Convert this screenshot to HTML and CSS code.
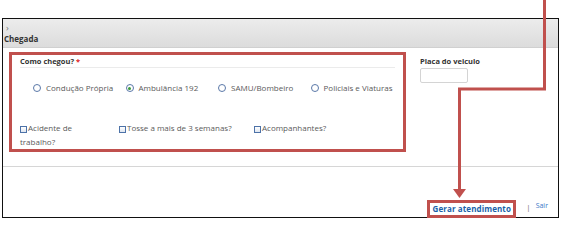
FILE: index.html
```html
<!DOCTYPE html>
<html lang="pt">
<head>
<meta charset="utf-8">
<title>Chegada</title>
<link rel="stylesheet" href="styles.css">
</head>
<body>
<div class="page">
  <div class="frame">
    <div class="header">
      <span class="chev">›</span>
      <span class="title">Chegada</span>
    </div>
    <div class="content">
      <div class="section annotated">
        <div class="label line">Como chegou?<span class="req">*</span></div>
        <div class="radios">
          <label class="radio"><span class="circle"></span>Condução Própria</label>
          <label class="radio"><span class="circle checked"></span>Ambulância 192</label>
          <label class="radio"><span class="circle"></span>SAMU/Bombeiro</label>
          <label class="radio"><span class="circle"></span>Policiais e Viaturas</label>
        </div>
        <div class="checks">
          <label class="check narrow"><span class="box"></span>Acidente de trabalho?</label>
          <label class="check"><span class="box"></span>Tosse a mais de 3 semanas?</label>
          <label class="check"><span class="box"></span>Acompanhantes?</label>
        </div>
      </div>
      <div class="field">
        <div class="label">Placa do veiculo</div>
        <div class="input"></div>
      </div>
    </div>
    <div class="footer">
      <span class="btn">Gerar atendimento</span>
      <span class="sep">|</span>
      <span class="sair">Sair</span>
    </div>
  </div>
  <svg class="arrow" width="564" height="220" viewBox="0 0 564 220">
    <path d="M544.5 0 V89 H459.5 V191" fill="none" stroke="#c0504d" stroke-width="3"/>
    <polygon points="453,189 466,189 459.5,198" fill="#c0504d"/>
  </svg>
</div>
</body>
</html>
```

FILE: styles.css
```css
* { box-sizing: border-box; }
html, body { margin: 0; padding: 0; background: #fff; }
body { font-family: "Open Sans", "Liberation Sans", sans-serif; color: #444; }

.page {
  position: relative;
  width: 564px;
  height: 220px;
  padding: 18px 0 0 2px;
  overflow: hidden;
}

.frame {
  width: 557px;
  height: 200px;
  border: 1px solid #111;
  display: flex;
  flex-direction: column;
}

.header {
  height: 29px;
  background: linear-gradient(#ececec, #dcdcdc);
  border-bottom: 1px solid #d0d0d0;
  display: flex;
  flex-direction: column;
  padding: 4px 0 0 1px;
}
.chev { font-size: 9px; line-height: 10px; color: #777; padding-left: 2px; }
.title { font-size: 8px; line-height: 11px; font-weight: 700; color: #333; }

.content {
  flex: 0 0 119px;
  display: flex;
  align-items: flex-start;
  border-bottom: 1px solid #d6d6d6;
}

.annotated { border: 3px solid #c0504d; }

.section {
  margin: 4px 0 0 6px;
  width: 397px;
  height: 100px;
  padding: 1px 8px 0 8px;
}

.label {
  font-size: 7.5px;
  font-weight: 700;
  color: #333;
  line-height: 11px;
}
.label.line { border-bottom: 1px solid #ebebeb; }
.req { color: #e02020; margin-left: 2px; }

.radios {
  display: grid;
  grid-template-columns: repeat(4, 92.5px);
  margin: 14px 0 0 13px;
  font-size: 8px;
  line-height: 12px;
  color: #5a5a5a;
}
.radio { display: flex; align-items: center; gap: 5px; white-space: nowrap; }
.circle {
  width: 8px;
  height: 8px;
  border: 1px solid #5a78a8;
  border-radius: 50%;
  background: #fff;
  display: flex;
  align-items: center;
  justify-content: center;
}
.circle.checked::after {
  content: "";
  width: 3px;
  height: 3px;
  border-radius: 50%;
  background: #3a9a3a;
}

.checks {
  display: grid;
  grid-template-columns: 99px 135px auto;
  margin-top: 27px;
  font-size: 8px;
  line-height: 14px;
  color: #5a5a5a;
}
.check.narrow { width: 86px; }
.box {
  display: inline-block;
  width: 7px;
  height: 7px;
  border: 1px solid #4d72a8;
  background: linear-gradient(#fff, #dfe6f0);
  vertical-align: -2px;
  margin-right: 1px;
}

.field { margin: 8px 0 0 14px; }
.input {
  width: 48px;
  height: 15px;
  margin-top: 1px;
  border: 1px solid #d4d4d4;
  border-radius: 2px;
  background: #fff;
}

.footer {
  flex: 1;
  display: flex;
  justify-content: flex-end;
  align-items: flex-end;
  padding-right: 10px;
}
.btn {
  border: 3px solid #c0504d;
  height: 18px;
  width: 89px;
  margin-bottom: -1px;
  font-size: 8px;
  font-weight: 700;
  line-height: 12px;
  color: #1a5fa8;
  text-align: center;
  letter-spacing: 0.1px;
}
.sep { font-size: 8px; color: #777; margin: 0 5px 0 10px; line-height: 12px; padding-bottom: 4px; }
.sair { font-size: 7px; color: #3a78c8; line-height: 12px; padding-bottom: 5px; }

.arrow {
  position: absolute;
  left: 0;
  top: 0;
  pointer-events: none;
}
```
